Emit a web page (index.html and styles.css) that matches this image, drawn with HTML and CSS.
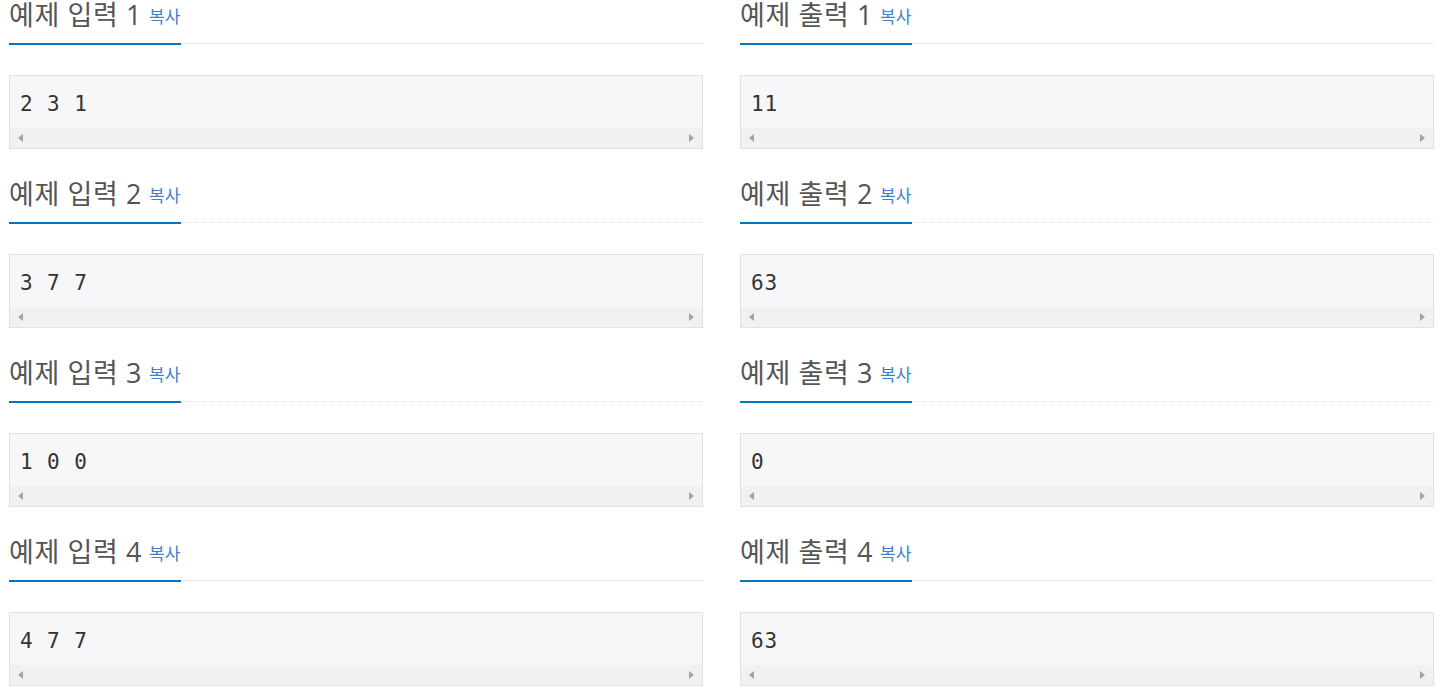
FILE: index.html
```html
<!DOCTYPE html>
<html lang="ko">
<head>
    <meta charset="UTF-8">
    <meta name="viewport" content="width=device-width, initial-scale=1.0">
    <title>예제</title>
    <link rel="stylesheet" href="styles.css">
</head>
<body>
    <div class="samples">
        <div class="sample-row">
            <section class="sample">
                <div class="headline"><h2>예제 입력 1<a class="copy-button">복사</a></h2></div>
                <div class="sample-box"><pre>2 3 1</pre><div class="scrollbar"><i class="arrow-left"></i><i class="arrow-right"></i></div></div>
            </section>
            <section class="sample">
                <div class="headline"><h2>예제 출력 1<a class="copy-button">복사</a></h2></div>
                <div class="sample-box"><pre>11</pre><div class="scrollbar"><i class="arrow-left"></i><i class="arrow-right"></i></div></div>
            </section>
        </div>
        <div class="sample-row">
            <section class="sample">
                <div class="headline"><h2>예제 입력 2<a class="copy-button">복사</a></h2></div>
                <div class="sample-box"><pre>3 7 7</pre><div class="scrollbar"><i class="arrow-left"></i><i class="arrow-right"></i></div></div>
            </section>
            <section class="sample">
                <div class="headline"><h2>예제 출력 2<a class="copy-button">복사</a></h2></div>
                <div class="sample-box"><pre>63</pre><div class="scrollbar"><i class="arrow-left"></i><i class="arrow-right"></i></div></div>
            </section>
        </div>
        <div class="sample-row">
            <section class="sample">
                <div class="headline"><h2>예제 입력 3<a class="copy-button">복사</a></h2></div>
                <div class="sample-box"><pre>1 0 0</pre><div class="scrollbar"><i class="arrow-left"></i><i class="arrow-right"></i></div></div>
            </section>
            <section class="sample">
                <div class="headline"><h2>예제 출력 3<a class="copy-button">복사</a></h2></div>
                <div class="sample-box"><pre>0</pre><div class="scrollbar"><i class="arrow-left"></i><i class="arrow-right"></i></div></div>
            </section>
        </div>
        <div class="sample-row">
            <section class="sample">
                <div class="headline"><h2>예제 입력 4<a class="copy-button">복사</a></h2></div>
                <div class="sample-box"><pre>4 7 7</pre><div class="scrollbar"><i class="arrow-left"></i><i class="arrow-right"></i></div></div>
            </section>
            <section class="sample">
                <div class="headline"><h2>예제 출력 4<a class="copy-button">복사</a></h2></div>
                <div class="sample-box"><pre>63</pre><div class="scrollbar"><i class="arrow-left"></i><i class="arrow-right"></i></div></div>
            </section>
        </div>
    </div>
</body>
</html>
```

FILE: styles.css
```css
body {
    margin: 0;
    padding: 0;
    background-color: #fff;
    font-family: "Open Sans", "Noto Sans CJK KR", sans-serif;
    color: #333;
}
.samples {
    padding-left: 9px;
}
.sample-row {
    display: grid;
    grid-template-columns: 694px 694px;
    column-gap: 37px;
}
.sample {
    padding-bottom: 30px;
}
.headline {
    display: flex;
    align-items: flex-end;
    height: 43px;
    border-bottom: 1px dotted #ddd;
}
.headline h2 {
    margin: 0 0 -2px 0;
    padding: 0 1px 9px 0;
    font-size: 27px;
    font-weight: normal;
    letter-spacing: 0.6px;
    line-height: 34px;
    color: #555;
    border-bottom: 2px solid #0076c0;
}
.copy-button {
    margin-left: 7px;
    font-size: 17px;
    letter-spacing: 0;
    color: #3f7fcb;
    vertical-align: 2px;
    cursor: pointer;
}
.sample-box {
    margin-top: 31px;
    border: 1px solid #e1e1e4;
    background-color: #f7f7f9;
}
.sample-box pre {
    margin: 0;
    height: 52px;
    box-sizing: border-box;
    padding: 13px 10px 0 10px;
    font-family: "DejaVu Sans Mono", monospace;
    font-size: 21px;
    letter-spacing: 0.9px;
    line-height: 30px;
    color: #333;
}
.scrollbar {
    display: flex;
    justify-content: space-between;
    align-items: center;
    height: 20px;
    padding: 0 8px;
    background-color: #f1f1f1;
}
.arrow-left, .arrow-right {
    display: block;
    width: 0;
    height: 0;
    border-top: 4.5px solid transparent;
    border-bottom: 4.5px solid transparent;
}
.arrow-left {
    border-right: 5px solid #a3a3a3;
}
.arrow-right {
    border-left: 5px solid #a3a3a3;
}
```
